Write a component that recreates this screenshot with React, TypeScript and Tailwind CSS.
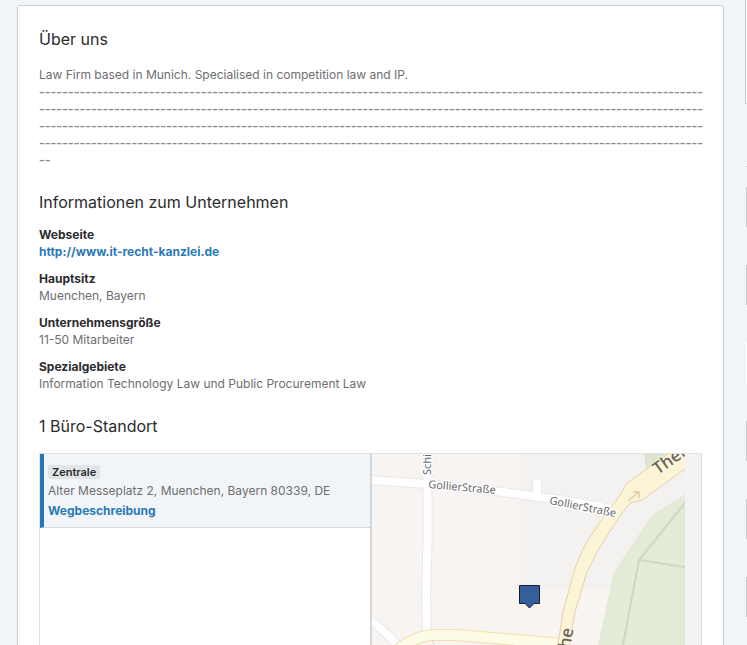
const DASHES = "-".repeat(462);

const facts = [
  { label: "Webseite", value: "http://www.it-recht-kanzlei.de", href: "http://www.it-recht-kanzlei.de" },
  { label: "Hauptsitz", value: "Muenchen, Bayern" },
  { label: "Unternehmensgröße", value: "11-50 Mitarbeiter" },
  { label: "Spezialgebiete", value: "Information Technology Law und Public Procurement Law" },
];

function StreetMap() {
  return (
    <svg
      className="block h-[300px] w-[313px] font-['Noto_Sans',sans-serif]"
      viewBox="0 0 313 300"
      role="img"
      aria-label="Karte"
    >
      <rect width="313" height="300" fill="#f8f4f2" />
      <rect x="147" width="166" height="135" fill="#f3f2f1" />
      <path d="M272 0L274 15L295 0Z" fill="#dde4d0" />
      <path d="M313 40L280 61L242 118L226 191L205 300H313Z" fill="#e3ead6" />
      <g fill="none" stroke="#d0d6c1" strokeWidth="2">
        <path d="M313 49L267 106L251 191L230 300" />
        <path d="M267 106L313 113" />
      </g>
      <g fill="none" stroke="#ebe7e4" strokeWidth="10">
        <path d="M0 26L55 30L131 38L188 46L242 56" />
        <path d="M55.500 0V90L54 140L55 180" />
        <path d="M165 40V29" strokeLinecap="round" />
        <path d="M-2 167Q4 168 32 198" />
      </g>
      <path d="M58 183L64 194" fill="none" stroke="#ddd9d6" strokeWidth="1" />
      <g fill="none" stroke="#fff" strokeWidth="8">
        <path d="M0 26L55 30L131 38L188 46L240 55" />
        <path d="M55.500 0V90L54 140L55 180" />
        <path d="M165 40V29" strokeLinecap="round" />
        <path d="M-2 167Q4 168 32 198" />
      </g>
      <path d="M15 204Q40 182 60 181L85 181L190 190" fill="none" stroke="#f3dfa9" strokeWidth="12" />
      <path d="M15 204Q40 182 60 181L85 181L192 190" fill="none" stroke="#fefbe6" strokeWidth="10" />
      <path
        d="M170 260L187 184L191 158L203 114L213 91L228 68L248 41L255 29L299 -2H320V10L313 15L270 46L258 49L247 63L225 98L215 118L203 158L197 191L182 260Z"
        fill="#fbf4d6"
        stroke="#e6d1a8"
      />
      <path d="M256 47L267 38M261 38H267V44" fill="none" stroke="#e3cda4" strokeWidth="1.5" />
      <g fill="#69676a" stroke="#fff" strokeWidth="3" paintOrder="stroke" fontSize="11">
        <text x="0" y="0" transform="translate(56 34) rotate(5)">GollierStraße</text>
        <text x="0" y="0" transform="translate(177 50) rotate(11)">GollierStraße</text>
        <text x="0" y="0" transform="translate(59 21) rotate(-90)">Schießstättstraße</text>
      </g>
      <g fill="#665f5b" stroke="#fbf4d6" strokeWidth="2" paintOrder="stroke" fontSize="17" fontWeight="500">
        <text x="0" y="0" transform="translate(286 21) rotate(-35)">Theresienhöhe</text>
        <text x="0" y="0" transform="translate(198 195) rotate(-80)">he</text>
      </g>
      <path d="M147.500 131.500H167.500V149.500H162L157.500 154L153 149.500H147.500Z" fill="#335f9a" stroke="#14202f" />
    </svg>
  );
}

function SideButton() {
  return <div className="ml-px h-[42px] w-[140px] rounded-xs border border-[#c3c9ce]" />;
}

export default function App() {
  return (
    <div className="flex h-screen gap-[21px] overflow-hidden bg-[#f1f5f8] pl-[17px] font-['Inter',sans-serif] text-xs leading-[17px] text-[#6d6e70]">
      <main className="mt-[5px] h-[800px] min-w-0 flex-1 rounded-[3px] border border-[#cdd1d4] bg-white px-[21px] pt-[21px] shadow-xs">
        <section>
          <h2 className="text-base leading-6 text-[#2a2c2e]">Über uns</h2>
          <p className="mt-[15px]">Law Firm based in Munich. Specialised in competition law and IP.</p>
          <p className="-mr-1 font-['DejaVu_Sans',sans-serif] text-base leading-[17px] break-all text-[#8a8b8d]">
            {DASHES}
          </p>
        </section>

        <section className="mt-[22px]">
          <h2 className="text-base leading-6 text-[#2a2c2e]">Informationen zum Unternehmen</h2>
          <dl className="mt-3 flex flex-col gap-[10px]">
            {facts.map((fact) => (
              <div key={fact.label}>
                <dt className="font-bold text-[#2a2c2e]">{fact.label}</dt>
                <dd>
                  {fact.href ? (
                    <a href={fact.href} className="font-bold text-[#2a7ab8]">
                      {fact.value}
                    </a>
                  ) : (
                    fact.value
                  )}
                </dd>
              </div>
            ))}
          </dl>
        </section>

        <section className="mt-[22px]">
          <h2 className="text-base leading-6 text-[#2a2c2e]">1 Büro-Standort</h2>
          <div className="mt-[15px] flex h-[300px] border border-[#dfe1e3]">
            <div className="w-[calc(50%+1px)] border-r-2 border-[#d5d8da]">
              <div className="h-[74px] border-b border-l-4 border-b-[#d5d9dc] border-l-[#2a77b5] bg-[#f1f5f8] pt-[11px] pl-1">
                <span className="block w-fit rounded-xs bg-[#e1e5e8] px-1 text-[11px] leading-[14px] font-semibold text-[#2a2c2e]">
                  Zentrale
                </span>
                <p className="mt-[3px]">Alter Messeplatz 2, Muenchen, Bayern 80339, DE</p>
                <a href="#wegbeschreibung" className="mt-[3px] block w-fit font-bold text-[#2a7ab8]">
                  Wegbeschreibung
                </a>
              </div>
            </div>
            <div className="min-w-0 flex-1 overflow-hidden bg-[#f3f3f3]">
              <StreetMap />
            </div>
          </div>
        </section>
      </main>

      <aside className="w-[2px] shrink-0 overflow-hidden">
        <div className="h-[104px] w-[300px] border border-t-0 border-[#c6cace] bg-white" />
        <div className="mt-[62px] ml-px h-px w-[140px] bg-[#d5d9dc]" />
        <div className="mt-[19px] flex flex-col gap-9">
          <SideButton />
          <SideButton />
        </div>
        <div className="mt-9 ml-px h-[42px] w-[140px] bg-white" />
        <div className="mt-9 flex flex-col gap-9">
          <SideButton />
          <SideButton />
          <SideButton />
        </div>
      </aside>
    </div>
  );
}
